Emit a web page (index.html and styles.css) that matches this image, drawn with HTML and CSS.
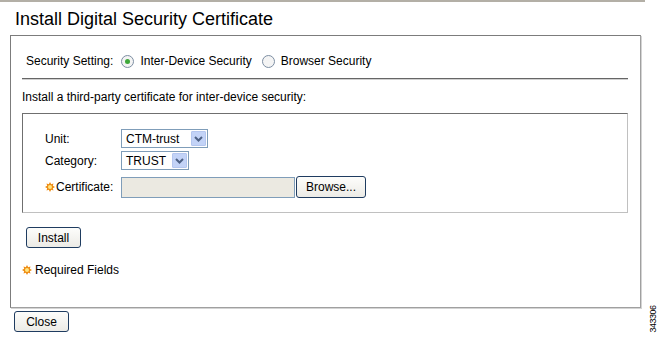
FILE: index.html
```html
<!DOCTYPE html>
<html lang="en">
<head>
    <meta charset="UTF-8">
    <title>Install Digital Security Certificate</title>
    <link rel="stylesheet" href="styles.css">
</head>
<body>
    <div class="topline"></div>
    <h1 class="title">Install Digital Security Certificate</h1>

    <div class="panel">
        <div class="setting">
            <span class="setting-label">Security Setting:</span>
            <span class="radio checked"></span>
            <span class="radio-text">Inter-Device Security</span>
            <span class="radio"></span>
            <span class="radio-text">Browser Security</span>
        </div>
        <div class="separator"></div>
        <p class="intro">Install a third-party certificate for inter-device security:</p>

        <div class="fields">
            <div class="row">
                <span class="label">Unit:</span>
                <span class="select unit">
                    <span class="select-text">CTM-trust</span>
                    <span class="arrow"><svg width="9" height="6" viewBox="0 0 9 6"><path d="M1 1 L4.5 4.5 L8 1" fill="none" stroke="#4d6185" stroke-width="2"/></svg></span>
                </span>
            </div>
            <div class="row">
                <span class="label">Category:</span>
                <span class="select category">
                    <span class="select-text">TRUST</span>
                    <span class="arrow"><svg width="9" height="6" viewBox="0 0 9 6"><path d="M1 1 L4.5 4.5 L8 1" fill="none" stroke="#4d6185" stroke-width="2"/></svg></span>
                </span>
            </div>
            <div class="row row-cert">
                <span class="label"><svg class="req" width="10" height="10" viewBox="0 0 10 10"><path d="M5 0 L6.2 2.2 L8.5 1.5 L7.8 3.8 L10 5 L7.8 6.2 L8.5 8.5 L6.2 7.8 L5 10 L3.8 7.8 L1.5 8.5 L2.2 6.2 L0 5 L2.2 3.8 L1.5 1.5 L3.8 2.2 Z" fill="#ee8a10"/><circle cx="5" cy="5" r="2" fill="#ffe680"/></svg>Certificate:</span>
                <span class="file-input"></span>
                <span class="btn browse">Browse...</span>
            </div>
        </div>

        <span class="btn install">Install</span>

        <div class="required">
            <svg class="req" width="10" height="10" viewBox="0 0 10 10"><path d="M5 0 L6.2 2.2 L8.5 1.5 L7.8 3.8 L10 5 L7.8 6.2 L8.5 8.5 L6.2 7.8 L5 10 L3.8 7.8 L1.5 8.5 L2.2 6.2 L0 5 L2.2 3.8 L1.5 1.5 L3.8 2.2 Z" fill="#ee8a10"/><circle cx="5" cy="5" r="2" fill="#ffe680"/></svg>
            Required Fields
        </div>
    </div>

    <span class="btn close">Close</span>

    <div class="figure-id">343306</div>
</body>
</html>
```

FILE: styles.css
```css
* {
    box-sizing: border-box;
}
body {
    margin: 0;
    position: relative;
    width: 660px;
    height: 340px;
    font-family: 'Liberation Sans', Arial, sans-serif;
    font-size: 12px;
    color: #000;
    background: #fff;
}
.topline {
    width: 645px;
    height: 2px;
    background-color: #b3afa6;
}
.title {
    margin: 7px 0 0 15px;
    font-size: 18px;
    font-weight: normal;
    line-height: 21px;
}
.panel {
    margin: 5px 0 0 10px;
    width: 631px;
    height: 273px;
    border: 1px solid #7c7c7c;
    border-right-color: #a0a0a0;
    border-bottom-color: #a0a0a0;
    box-shadow: 1px 1px 0 #d4d4d4;
}
.setting {
    display: flex;
    align-items: center;
    height: 22px;
    margin: 14px 0 0 15px;
}
.setting-label {
    margin-right: 8px;
}
.radio {
    width: 13px;
    height: 13px;
    border: 1px solid #7d8ea3;
    border-radius: 50%;
    background: #f4f4f4;
    display: flex;
    align-items: center;
    justify-content: center;
}
.radio.checked:after {
    content: "";
    width: 5px;
    height: 5px;
    border-radius: 50%;
    background: #3fa83a;
}
.radio-text {
    margin: 0 10px 0 6px;
}
.separator {
    margin: 6px 0 0 11px;
    width: 606px;
    height: 2px;
    border-top: 1px solid #666;
    border-bottom: 1px solid #d0d0d0;
}
.intro {
    margin: 10px 0 0 11px;
    line-height: 14px;
}
.fields {
    margin: 9px 0 0 11px;
    width: 606px;
    height: 100px;
    padding: 15px 0 0 22px;
    border: 1px solid #6f6f6f;
    border-right-color: #c0c0c0;
    border-bottom-color: #c0c0c0;
}
.row {
    display: flex;
    align-items: center;
    height: 19px;
    margin-bottom: 3px;
}
.row-cert {
    height: 22px;
    margin-top: 6px;
}
.label {
    width: 76px;
    display: flex;
    align-items: center;
}
.req {
    margin-right: 1px;
    flex-shrink: 0;
}
.select {
    display: flex;
    align-items: center;
    height: 19px;
    border: 1px solid #7f9db9;
    padding-left: 4px;
    justify-content: space-between;
}
.select.unit {
    width: 87px;
}
.select.category {
    width: 68px;
}
.arrow {
    width: 15px;
    height: 15px;
    margin-right: 1px;
    background: #c3d3f7;
    border: 1px solid #b4c6ef;
    border-radius: 1px;
    display: flex;
    align-items: center;
    justify-content: center;
}
.file-input {
    width: 174px;
    height: 21px;
    background: #ebe9e1;
    border: 1px solid #7f9db9;
}
.btn {
    display: inline-flex;
    align-items: center;
    justify-content: center;
    height: 21px;
    border: 1px solid #1f3c60;
    border-radius: 3px;
    background: linear-gradient(#fdfdfb, #ecebe6);
}
.browse {
    width: 70px;
    height: 22px;
    margin-left: 1px;
}
.install {
    width: 55px;
    margin: 14px 0 0 15px;
}
.required {
    display: flex;
    align-items: center;
    margin: 15px 0 0 11px;
    line-height: 14px;
}
.required .req {
    margin-right: 3px;
}
.close {
    width: 55px;
    margin: 3px 0 0 14px;
}
.figure-id {
    position: absolute;
    left: 639px;
    top: 314px;
    font-size: 9px;
    letter-spacing: -0.5px;
    transform: rotate(-90deg);
}
```
